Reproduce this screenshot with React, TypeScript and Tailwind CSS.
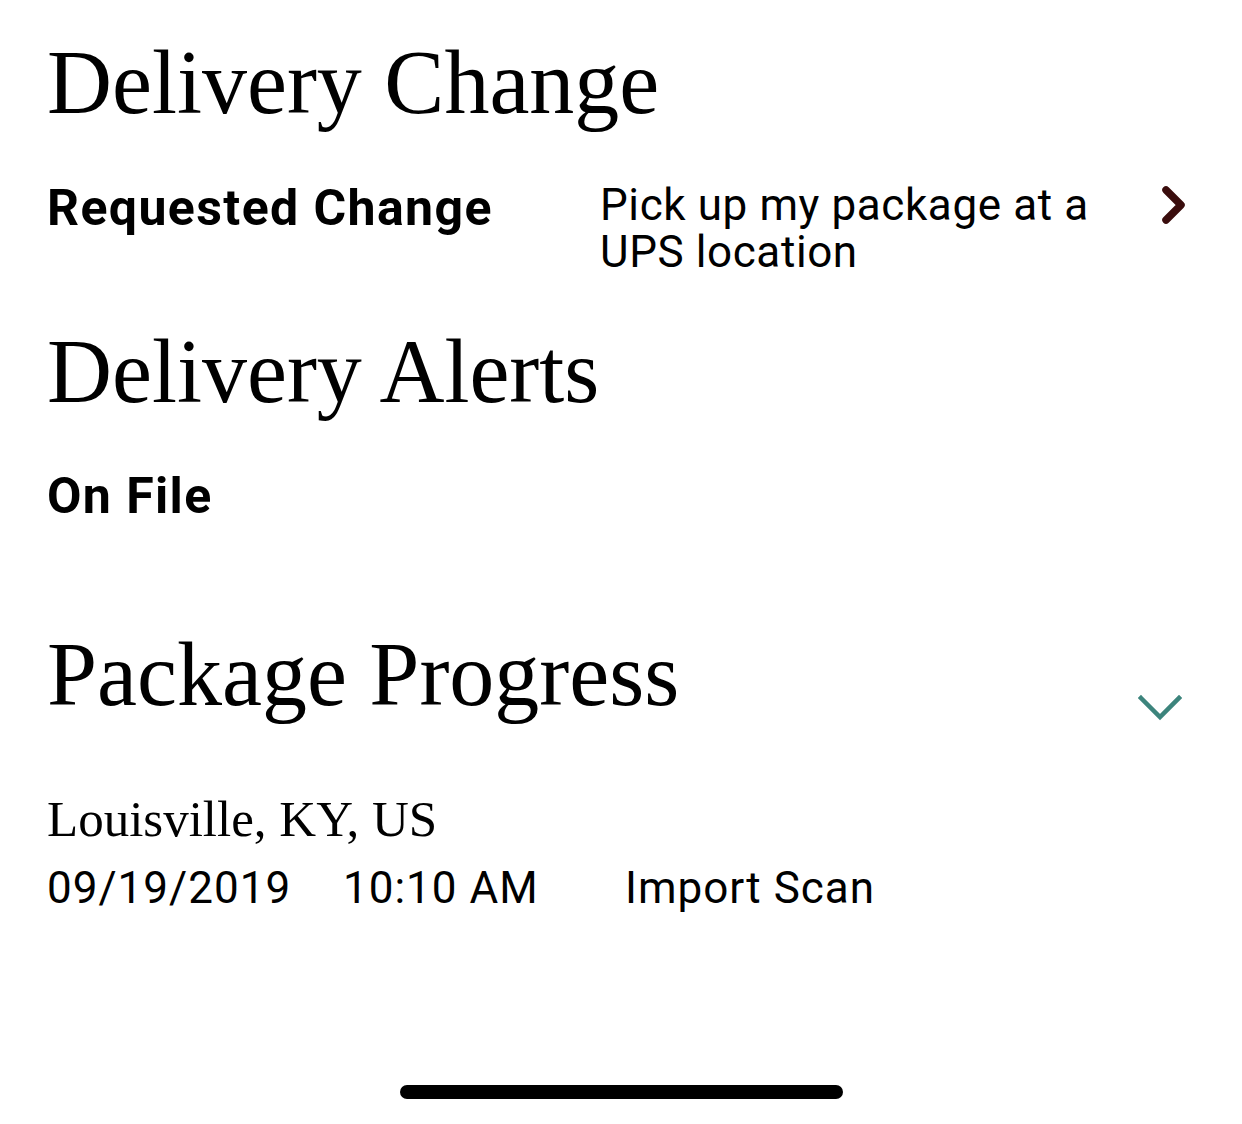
const serif = { fontFamily: '"Liberation Serif", "DejaVu Serif", serif' };

const ChevronRight = () => (
  <svg width="28" height="40" viewBox="0 0 28 40" fill="none">
    <path d="M6 5 L21 20 L6 35" stroke="#3a0d0d" strokeWidth="7.5" strokeLinecap="round" strokeLinejoin="round" />
  </svg>
);

const ChevronDown = () => (
  <svg width="44" height="28" viewBox="0 0 44 28" fill="none">
    <path d="M3 4 L22 23 L41 4" stroke="#3c847c" strokeWidth="4.5" strokeLinecap="square" />
  </svg>
);

const App = () => {
  return (
    <div className="w-[1242px] h-[1124px] bg-white text-black flex flex-col px-[47px] font-['Roboto',sans-serif]">
      <h1 className="mt-[38px] text-[90px] leading-[90px]" style={serif}>Delivery Change</h1>

      <div className="mt-[55px] flex items-start">
        <div className="w-[553px] text-[50px] leading-[50px] font-bold tracking-[1.4px]">Requested Change</div>
        <div className="-mt-[1px] w-[510px] text-[44px] leading-[47px] tracking-[0.6px]">
          Pick up my package at a<br />UPS location
        </div>
        <div className="ml-auto mr-[7px] mt-[2px]">
          <ChevronRight />
        </div>
      </div>

      <h1 className="mt-[51px] text-[90px] leading-[90px]" style={serif}>Delivery Alerts</h1>
      <div className="mt-[54px] text-[50px] leading-[50px] font-bold tracking-[1.4px]">On File</div>

      <div className="mt-[109px] flex items-end justify-between">
        <h1 className="text-[90px] leading-[90px]" style={serif}>Package Progress</h1>
        <div className="mr-[13px] -mb-[2px]">
          <ChevronDown />
        </div>
      </div>

      <div className="mt-[74px] text-[51px] leading-[50px]" style={serif}>Louisville, KY, US</div>
      <div className="mt-[21px] flex text-[44px] leading-[46px] tracking-[1px]">
        <span className="w-[296px]">09/19/2019</span>
        <span className="w-[282px]">10:10 AM</span>
        <span>Import Scan</span>
      </div>

      <div className="mt-auto mb-[25px] self-center w-[443px] h-[14px] rounded-full bg-black" />
    </div>
  );
};

export default App;
